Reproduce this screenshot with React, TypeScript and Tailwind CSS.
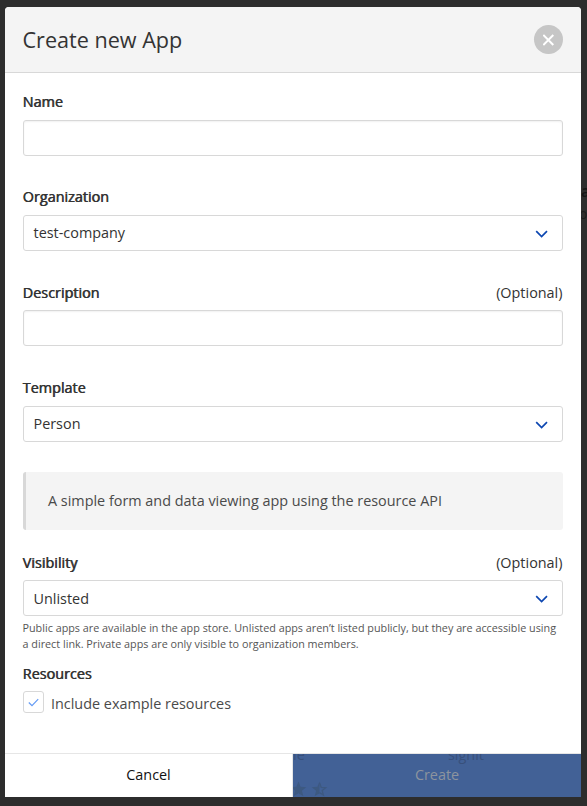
import React from 'react';

function Chevron() {
  return (
    <svg width="14" height="10" viewBox="0 0 14 10" fill="none" stroke="#0d47b1" strokeWidth="1.7">
      <path d="M1.2 2.2 L6.6 7.6 L12 2.2" />
    </svg>
  );
}

function Label({ text, optional }: { text: string; optional?: boolean }) {
  return (
    <div className="-ml-[0.5px] flex h-5 items-center justify-between leading-5 text-[#333]">
      <span className="[text-shadow:0.6px_0_0_#333]">{text}</span>
      {optional && <span className="mr-[0.5px]">(Optional)</span>}
    </div>
  );
}

function Select({ value, low }: { value: string; low?: boolean }) {
  return (
    <div className="flex h-9 items-center justify-between rounded-[3px] border border-[#d8d8d8] bg-white pr-[13.5px] pl-[9.5px] text-[#333]">
      <span className={low ? 'pt-0.5 leading-5' : 'leading-5'}>{value}</span>
      <span className="mt-px"><Chevron /></span>
    </div>
  );
}

function Input() {
  return <input className="block h-9 w-full rounded-[3px] border border-[#d8d8d8] bg-white px-2.5 shadow-[inset_0_1px_2px_rgba(0,0,0,0.06)] outline-none" />;
}

export default function App() {
  return (
    <div className="relative h-[806px] w-[587px] overflow-hidden bg-[#2d2d2d] pt-[7px] pl-[5px] font-['Open_Sans',sans-serif] text-[14.4px]">
      <div className="absolute top-[181px] left-[581px] leading-5 text-[#151515]">
        <div className="text-[16px] font-semibold">a</div>
        <div className="mt-[3px] -ml-[2px] text-[14px] text-[#1c1c1c]">o</div>
      </div>
      <div className="relative flex h-[790px] w-[576px] flex-col overflow-hidden rounded-t-[4px] bg-white">
        <header className="flex h-[66px] shrink-0 items-center justify-between border-b border-[#d8d8d8] bg-[#f4f4f4] px-[18px]">
          <h1 className="-ml-[0.5px] text-[21.6px] leading-8 text-[#333]">Create new App</h1>
          <button aria-label="Close" className="flex size-[29px] items-center justify-center rounded-full bg-[#c6c6c6]">
            <svg width="12" height="12" viewBox="0 0 12 12" stroke="white" strokeWidth="2">
              <path d="M0.3 1 L10.3 11 M10.3 1 L0.3 11" />
            </svg>
          </button>
        </header>
        <main className="flex h-[680px] shrink-0 flex-col px-[18px] pt-[19px]">
          <section className="h-[95px]"><Label text="Name" /><div className="mt-2"><Input /></div></section>
          <section className="h-[96px]"><Label text="Organization" /><div className="mt-2"><Select value="test-company" /></div></section>
          <section className="h-[95px]"><Label text="Description" optional /><div className="mt-[7px]"><Input /></div></section>
          <section className="h-[94px]"><Label text="Template" /><div className="mt-2"><Select value="Person" /></div></section>
          <div className="flex h-[58px] shrink-0 items-center rounded-[3px] border-l-[3px] border-[#d8d8d8] bg-[#f4f4f4] pb-px pl-[22px] text-[#4a4a4a]">
            A simple form and data viewing app using the resource API
          </div>
          <section className="mt-[23px]">
            <Label text="Visibility" optional />
            <div className="mt-[7px]"><Select value="Unlisted" low /></div>
            <p className="mt-1 -ml-[0.5px] text-[10.8px] leading-4 text-[#555]">
              Public apps are available in the app store. Unlisted apps aren’t listed publicly, but they are accessible using<br />
              a direct link. Private apps are only visible to organization members.
            </p>
          </section>
          <section className="mt-3">
            <Label text="Resources" />
            <div className="mt-[7px] flex items-center text-[#4a4a4a]">
              <span className="flex h-[22px] w-[21px] items-center justify-center rounded-[3px] border border-[#d8d8d8]">
                <svg width="11" height="9" viewBox="0 0 11 9" fill="none" stroke="#649bf5" strokeWidth="1.2">
                  <path d="M0.8 4.5 L4 7.7 L10.2 1.2" />
                </svg>
              </span>
              <span className="-mb-1 ml-[7px] leading-[22px]">Include example resources</span>
            </div>
          </section>
        </main>
        <footer className="grid h-11 shrink-0 grid-cols-2 border-t border-[#e6e6e6]">
          <button className="border-r border-[#e6e6e6] pb-px text-[#111]">Cancel</button>
          <button className="relative overflow-hidden bg-[#426196] pb-px text-[#8d949e]">
            <span className="absolute top-[-9px] left-0 leading-5 text-[#38507b]">le</span>
            <span className="absolute top-[-9px] left-[155px] leading-5 text-[#38507b]">signit</span>
            <svg className="absolute top-[27px] left-[-3px]" width="40" height="17" viewBox="0 0 40 17" fill="#3d5981">
              <path d="M8.5 .5 L10.6 5.8 16.3 6.2 11.9 9.8 13.4 15.3 8.5 12.3 3.6 15.3 5.1 9.8 .7 6.2 6.4 5.8Z" />
              <path d="M29.5 .5 L27.4 5.8 21.7 6.2 26.1 9.8 24.6 15.3 29.5 12.3Z" />
              <path fill="none" stroke="#3d5981" strokeWidth="1.3" d="M29.5 1.8 L31.2 6.3 35.7 6.7 32.2 9.6 33.4 14 29.5 11.6" />
            </svg>
            Create
          </button>
        </footer>
      </div>
    </div>
  );
}
